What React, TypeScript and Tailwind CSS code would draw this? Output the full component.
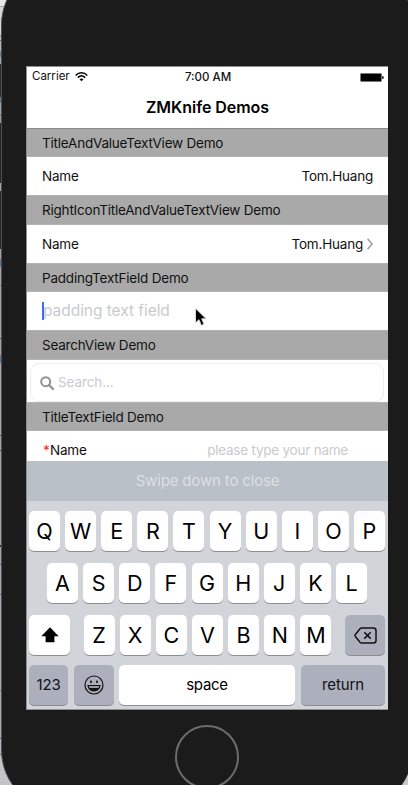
import React from "react";

const inter = "font-['Inter','Liberation_Sans',sans-serif]";

function Band({ children, h }: { children: React.ReactNode; h: string }) {
  return (
    <div className={`flex items-center border-y border-[#b4b4b4] bg-[#a9a9a9] pl-[15px] text-[13.5px] tracking-[-0.21px] text-[#111] ${h}`}>
      <span className="pt-px">{children}</span>
    </div>
  );
}

function Key({ label }: { label: string }) {
  return (
    <div className="flex h-[40px] w-[31px] items-center justify-center rounded-[5px] bg-white pt-px text-[21.5px] leading-none text-black shadow-[0_1px_0_#8b8e93]">
      {label}
    </div>
  );
}

const darkKey =
  "flex h-[40px] items-center justify-center rounded-[5px] bg-[#acb0bd] text-[15px] tracking-[-0.1px] text-[#111] shadow-[0_1px_0_#898c93]";

// Slivers of the desktop visible beside the phone.
const edge: [number, string][] = [
  [6, "#e4e6e8"], [1, "#a9abad"], [28, "#d4d6d8"], [1, "#777"], [4, "#b9bbbd"], [1, "#667"], [10, "#b4b6b8"],
  [6, "#6685a0"], [7, "#a5a7a9"], [33, "#2c2c2c"], [6, "#5a7893"], [11, "#9ea2a5"], [2, "#5d86a5"], [7, "#9a9c9e"],
  [60, "#252525"], [8, "#a5a5a5"], [58, "#282828"], [10, "#a2a4a4"], [8, "#587993"], [18, "#a2a5a7"],
  [1, "#577f9b"], [52, "#a1a3a4"], [1, "#24523e"], [16, "#a1a3a4"], [8, "#587993"], [72, "#a4a6a8"],
  [1, "#34654a"], [14, "#a3a5a7"], [1, "#284c39"], [94, "#a3a5a7"], [2, "#162e49"], [17, "#a3a5a9"],
  [1, "#5652a5"], [29, "#a8a8af"], [1, "#6c50a2"], [95, "#aaa9af"], [1, "#a150a4"], [47, "#aaaaae"],
  [1, "#5650a5"], [15, "#b4b4b8"], [1, "#a150a4"], [50, "#c4c4c6"],
];

export default function App() {
  return (
    <div className={`relative h-[785px] w-[408px] overflow-hidden bg-[#c6c7c8] ${inter}`}>
      <div className="absolute inset-y-0 left-0 flex w-[12px] flex-col">
        {edge.map(([h, c], i) => (
          <div key={i} className="shrink-0" style={{ height: h, background: c }} />
        ))}
      </div>
      <div className="absolute -top-[35px] left-px h-[845px] w-[412px] rounded-[60px] border-l border-[#505050] bg-[#1b1b1b]">
        <div className="ml-[24px] mt-[101px] flex h-[644px] w-[362px] flex-col overflow-hidden border-b border-l border-t border-[#8e8e8e] bg-white">
          <div className="flex h-[20px] shrink-0 items-center pl-[5px] pr-[4px] text-[11.5px] text-[#111]">
            <div className="flex flex-1 items-center gap-[5px]">
              <span>Carrier</span>
              <svg width="13" height="10" viewBox="0 0 13 10" fill="none" stroke="#000" strokeWidth="1.5">
                <path d="M.7 3.4C4-.1 9-.1 12.3 3.4" />
                <path d="M2.8 5.6C5 3.4 8 3.4 10.2 5.6" />
                <path d="M6.5 9.3 4.5 7.2Q6.5 5.6 8.5 7.2Z" fill="#000" stroke="none" />
              </svg>
            </div>
            <span className="pt-px font-medium">7:00 AM</span>
            <div className="flex flex-1 items-center justify-end">
              <div className="h-[9px] w-[22px] rounded-[1.5px] border border-[#777] bg-black" />
              <div className="h-[3px] w-[2px] rounded-r bg-[#444]" />
            </div>
          </div>
          <div className="flex h-[41px] shrink-0 items-center justify-center pb-[2px] text-[16px] font-semibold tracking-[-0.05px] text-black">
            <span>ZMKnife Demos</span>
          </div>
          <Band h="h-[29px] shrink-0 border-t-[#8a8a8a]">TitleAndValueTextView Demo</Band>
          <div className="flex h-[38px] shrink-0 items-center justify-between px-[15px] pt-px text-[13.5px] tracking-[-0.2px] text-[#111]">
            <span>Name</span>
            <span>Tom.Huang</span>
          </div>
          <Band h="h-[30px] shrink-0">RightIconTitleAndValueTextView Demo</Band>
          <div className="flex h-[38px] shrink-0 items-center px-[15px] text-[13.5px] tracking-[-0.2px] text-[#111]">
            <span className="flex-1">Name</span>
            <span>Tom.Huang</span>
            <svg className="ml-[4px]" width="6" height="12" viewBox="0 0 6 12" fill="none" stroke="#999" strokeWidth="1.5">
              <path d="M.6.8 5.1 6 .6 11.2" />
            </svg>
          </div>
          <Band h="h-[29px] shrink-0">PaddingTextField Demo</Band>
          <div className="flex h-[38px] shrink-0 items-center pl-[15px] text-[15.5px] tracking-[-0.05px] text-[#c9cacf]">
            <span className="h-[18px] w-[2px] bg-[#426bf2]" />
            <span className="-ml-px">padding text field</span>
          </div>
          <Band h="h-[30px] shrink-0">SearchView Demo</Band>
          <div className="flex h-[42px] shrink-0 pl-[3px] pr-[4px] pt-[3px]">
            <div className="flex flex-1 items-center rounded-[9px] border border-[#ececec] pl-[9px] text-[13.5px] tracking-[-0.1px] text-[#c9cacf]">
              <svg width="14" height="14" viewBox="0 0 14 14" fill="none" stroke="#929292">
                <circle cx="5.7" cy="5.7" r="4.5" strokeWidth="2" />
                <path d="m9 9 4 4" strokeWidth="2.4" strokeLinecap="round" />
              </svg>
              <span className="ml-[4px]">Search...</span>
            </div>
          </div>
          <Band h="h-[29px] shrink-0">TitleTextField Demo</Band>
          <div className="flex h-[30px] shrink-0 items-center pl-[16px] pr-[40px] pt-[8px] text-[13.5px] tracking-[-0.23px] text-[#111]">
            <span className="w-[7px] text-[#f22]">*</span>
            <span className="flex-1">Name</span>
            <span className="text-[#c9cacf]">please type your name</span>
          </div>
          <div className="flex h-[40px] shrink-0 items-center justify-center bg-[#b9c0c8] text-[15px] tracking-[-0.16px] text-[#dedfe1]">
            <span>Swipe down to close</span>
          </div>
          <div className="flex flex-1 flex-col bg-[#d1d4d9] pl-[2px] pr-[3px] pt-[10px]">
            <div className="flex justify-between">
              {"QWERTYUIOP".split("").map((k) => <Key key={k} label={k} />)}
            </div>
            <div className="mt-[12px] flex justify-between px-[18px]">
              {"ASDFGHJKL".split("").map((k) => <Key key={k} label={k} />)}
            </div>
            <div className="mt-[12px] flex justify-between">
              <div className="flex h-[40px] w-[41px] items-center justify-center rounded-[5px] bg-white shadow-[0_1px_0_#8b8e93]">
                <svg width="18" height="16" viewBox="0 0 18 16">
                  <path d="M9 .3 17.7 9.2H13.4V15.2H4.6V9.2H.3Z" />
                </svg>
              </div>
              <div className="flex w-[248px] justify-between">
                {"ZXCVBNM".split("").map((k) => <Key key={k} label={k} />)}
              </div>
              <div className={`w-[40px] ${darkKey}`}>
                <svg width="23" height="17" viewBox="0 0 23 17" fill="none" stroke="#111" strokeWidth="1.5">
                  <path d="M7.7 1H19.5Q22 1 22 3.5V13.5Q22 16 19.5 16H7.7Q6.7 16 6 15.2L1.4 9.6Q.6 8.5 1.4 7.4L6 1.8Q6.7 1 7.7 1Z" />
                  <path d="m10.3 5.2 6.4 6.4m0-6.4-6.4 6.4" />
                </svg>
              </div>
            </div>
            <div className="mt-[10px] flex">
              <div className={`w-[39px] ${darkKey}`}>123</div>
              <div className={`ml-[6px] w-[40px] ${darkKey}`}>
                <svg width="20" height="20" viewBox="0 0 20 20" fill="none" stroke="#111" strokeWidth="1.2">
                  <circle cx="10" cy="10" r="9" />
                  <ellipse cx="7" cy="6.8" rx="1" ry="1.4" fill="#111" stroke="none" />
                  <ellipse cx="13" cy="6.8" rx="1" ry="1.4" fill="#111" stroke="none" />
                  <path d="M4 10.5H16Q15.3 15.8 10 15.8T4 10.5Z" fill="#111" />
                  <path d="M4.7 11.1H15.3L14.5 13H5.5Z" fill="#9a9da6" stroke="none" />
                </svg>
              </div>
              <div className="ml-[5px] flex h-[40px] w-[176px] items-center justify-center rounded-[5px] bg-white text-[15px] tracking-[-0.3px] text-black shadow-[0_1px_0_#8b8e93]">
                space
              </div>
              <div className={`ml-[6px] w-[84px] ${darkKey}`}>return</div>
            </div>
          </div>
        </div>
        <div className="ml-[173px] mt-[15px] h-[64px] w-[64px] rounded-full border-[2.5px] border-[#6c6c6c]" />
      </div>
      <svg className="absolute left-[194px] top-[307px]" width="14" height="20" viewBox="0 0 14 20">
        <path d="M1.5 1.3V15.8L5 12.7 7.3 18.4 10 17.2 7.7 11.8H12.2Z" fill="#000" stroke="#d8d8d8" strokeWidth="1" />
      </svg>
    </div>
  );
}
